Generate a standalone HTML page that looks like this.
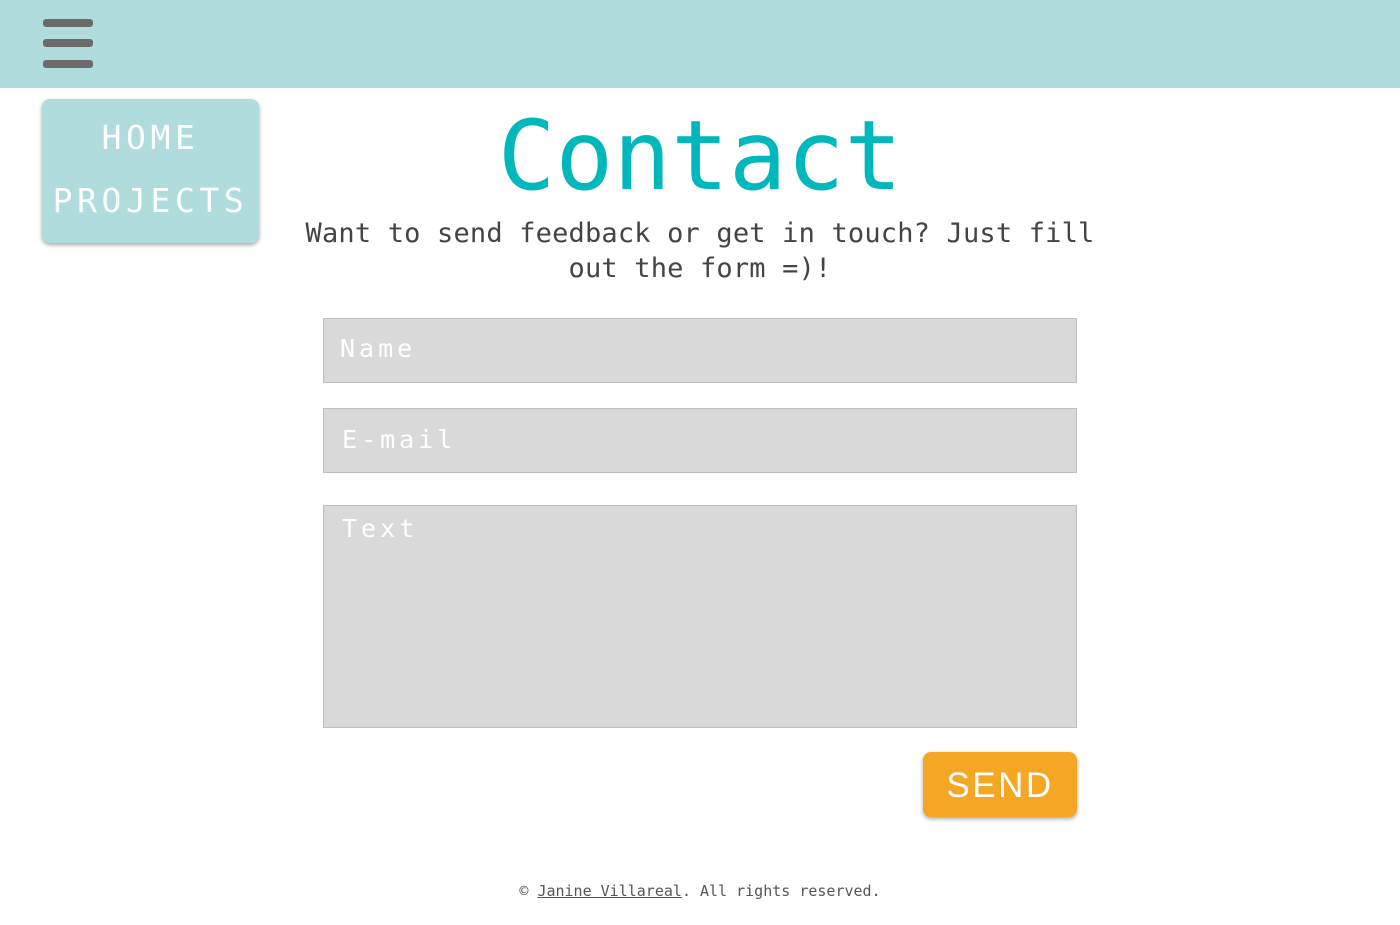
<!DOCTYPE html>
<html><head><meta charset="utf-8"><style>
body{margin:0;width:1400px;height:925px;background:#fff;position:relative;overflow:hidden;font-family:"DejaVu Sans Mono","Liberation Mono",monospace}
.hdr{position:absolute;left:0;top:0;width:1400px;height:88px;background:#b0dcdd}
.bar{position:absolute;left:43px;width:50px;height:8px;background:#6b6b6b;border-radius:3px}
.nav{position:absolute;left:42px;top:99px;width:217px;height:144px;background:#b0dcdd;border-radius:8px;box-shadow:0 2px 4px rgba(0,0,0,.35);color:#fff;text-align:center;font-size:33px;letter-spacing:4.6px}
.nav div{position:absolute;left:0;width:100%}
h1{position:absolute;left:0;width:1400px;top:101px;margin:0;text-align:center;font-weight:normal;font-size:96px;color:#00b7bb;line-height:110px}
.sub{position:absolute;left:290px;width:820px;top:216px;text-align:center;font-size:27px;letter-spacing:0.18px;color:#444;line-height:35px}
.in{position:absolute;left:323px;width:752px;background:#d9d9d9;border:1px solid #bdbdbd;color:#fff;font-size:25px;letter-spacing:4px}
.btn{position:absolute;left:923px;top:752px;width:154px;height:65px;background:#f5a623;border-radius:8px;box-shadow:0 2px 4px rgba(0,0,0,.35);color:#fff;font-family:"Liberation Sans",sans-serif;font-size:35px;letter-spacing:2.5px;text-align:center;line-height:67px}
.ft{position:absolute;left:0;width:1400px;top:882px;text-align:center;font-size:15px;color:#555}
.ft u{color:#555}
</style></head><body>
<div class="hdr"><div class="bar" style="top:19px"></div><div class="bar" style="top:39px"></div><div class="bar" style="top:60px"></div></div>
<div class="nav"><div style="top:19px">HOME</div><div style="top:82px">PROJECTS</div></div>
<h1>Contact</h1>
<div class="sub">Want to send feedback or get in touch? Just fill out the form =)!</div>
<div class="in" style="top:318px;height:63px"><span style="position:absolute;left:16px;top:15px">Name</span></div>
<div class="in" style="top:408px;height:63px"><span style="position:absolute;left:18px;top:16px">E-mail</span></div>
<div class="in" style="top:505px;height:221px"><span style="position:absolute;left:18px;top:8px">Text</span></div>
<div class="btn">SEND</div>
<div class="ft">© <u>Janine Villareal</u>. All rights reserved.</div>
</body></html>
